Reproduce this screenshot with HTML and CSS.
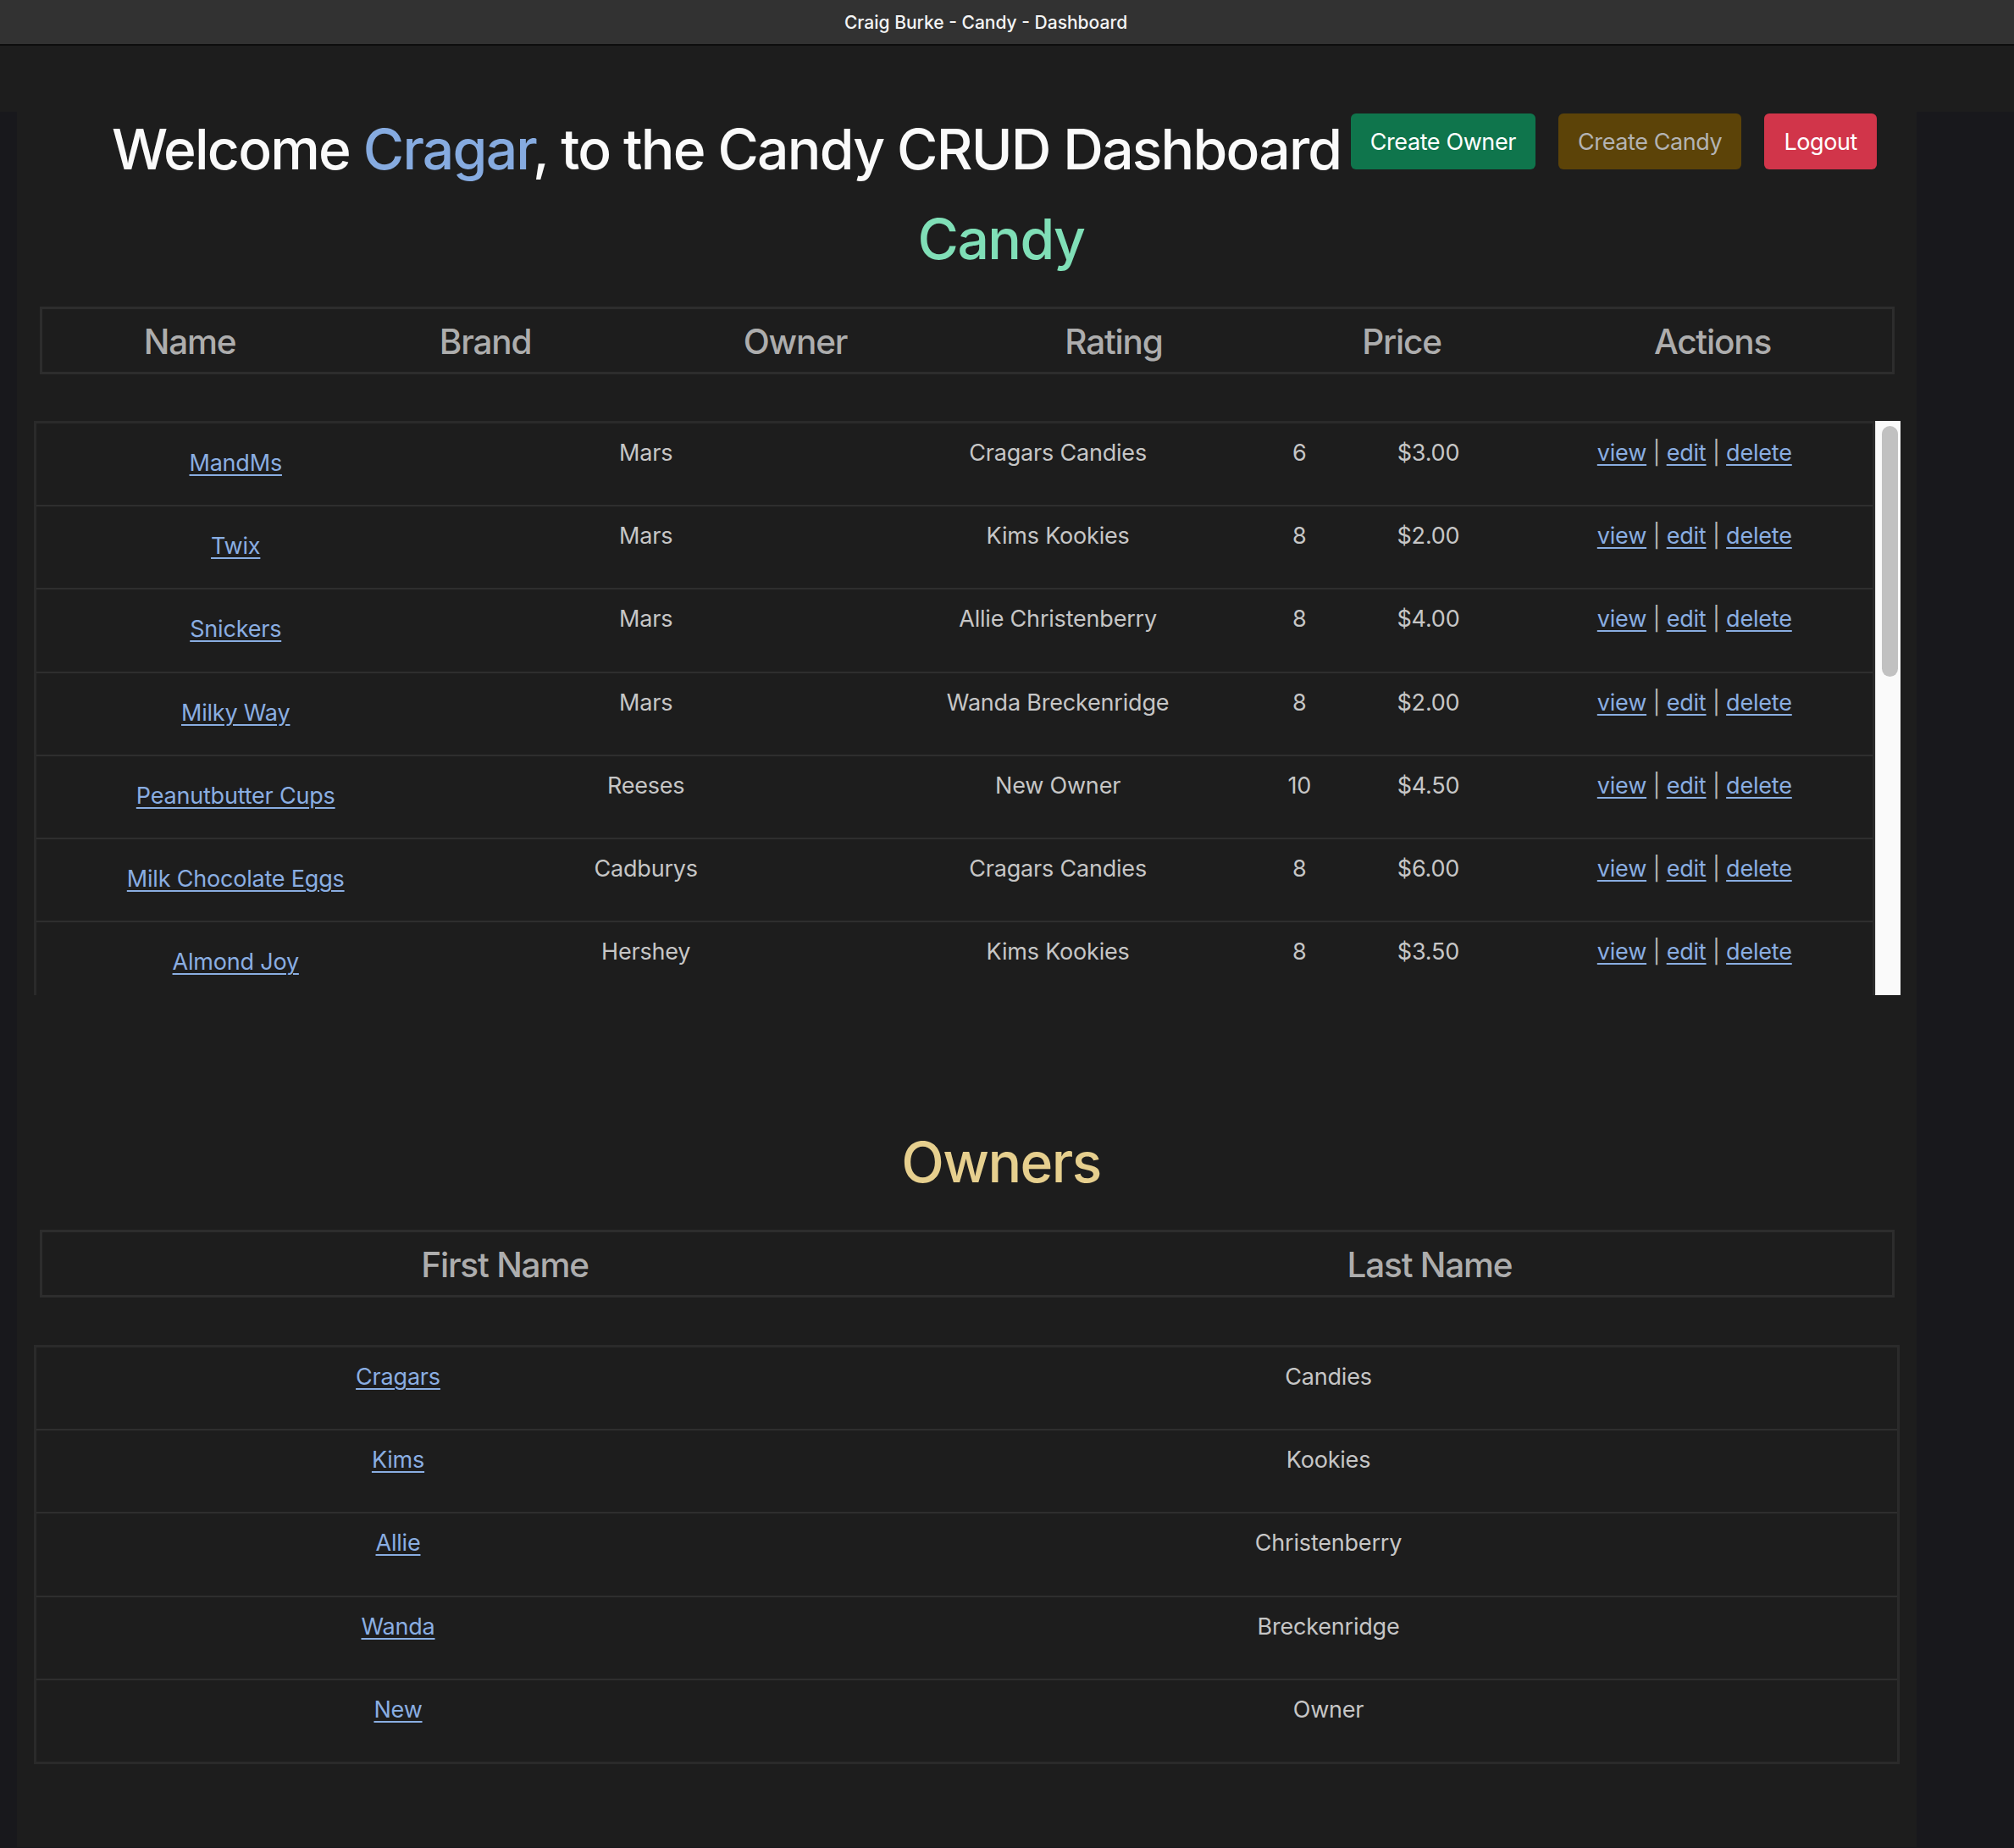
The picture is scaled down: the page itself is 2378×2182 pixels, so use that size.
FILE: index.html
```html
<!DOCTYPE html>
<html lang="en">
<head>
<meta charset="utf-8">
<title>Craig Burke - Candy - Dashboard</title>
<link rel="stylesheet" href="styles.css">
</head>
<body>
<div class="titlebar">Craig Burke - Candy - Dashboard</div>
<div class="topband"></div>
<main class="container">
  <header class="page-header">
    <h1 class="welcome">Welcome <span class="user">Cragar</span>, to the Candy CRUD Dashboard</h1>
    <nav class="actions">
      <a class="btn btn-success" href="#">Create Owner</a>
      <a class="btn btn-warning" href="#">Create Candy</a>
      <a class="btn btn-danger" href="#">Logout</a>
    </nav>
  </header>

  <h2 class="section-title candy-title">Candy</h2>
  <table class="head-table">
    <colgroup><col class="hc1"><col class="hc2"><col class="hc3"><col class="hc4"><col class="hc5"><col class="hc6"></colgroup>
    <thead><tr><th>Name</th><th>Brand</th><th>Owner</th><th>Rating</th><th>Price</th><th>Actions</th></tr></thead>
  </table>
  <div class="candy-scroll">
    <div class="candy-viewport">
      <table class="data-table candy-table">
        <colgroup><col class="cc1"><col class="cc2"><col class="cc3"><col class="cc4"><col class="cc5"><col class="cc6"></colgroup>
        <tbody>
          <tr><td class="name"><a href="#">MandMs</a></td><td>Mars</td><td>Cragars Candies</td><td>6</td><td>$3.00</td><td><a href="#">view</a> <span class="sep">|</span> <a href="#">edit</a> <span class="sep">|</span> <a href="#">delete</a></td></tr>
          <tr><td class="name"><a href="#">Twix</a></td><td>Mars</td><td>Kims Kookies</td><td>8</td><td>$2.00</td><td><a href="#">view</a> <span class="sep">|</span> <a href="#">edit</a> <span class="sep">|</span> <a href="#">delete</a></td></tr>
          <tr><td class="name"><a href="#">Snickers</a></td><td>Mars</td><td>Allie Christenberry</td><td>8</td><td>$4.00</td><td><a href="#">view</a> <span class="sep">|</span> <a href="#">edit</a> <span class="sep">|</span> <a href="#">delete</a></td></tr>
          <tr><td class="name"><a href="#">Milky Way</a></td><td>Mars</td><td>Wanda Breckenridge</td><td>8</td><td>$2.00</td><td><a href="#">view</a> <span class="sep">|</span> <a href="#">edit</a> <span class="sep">|</span> <a href="#">delete</a></td></tr>
          <tr><td class="name"><a href="#">Peanutbutter Cups</a></td><td>Reeses</td><td>New Owner</td><td>10</td><td>$4.50</td><td><a href="#">view</a> <span class="sep">|</span> <a href="#">edit</a> <span class="sep">|</span> <a href="#">delete</a></td></tr>
          <tr><td class="name"><a href="#">Milk Chocolate Eggs</a></td><td>Cadburys</td><td>Cragars Candies</td><td>8</td><td>$6.00</td><td><a href="#">view</a> <span class="sep">|</span> <a href="#">edit</a> <span class="sep">|</span> <a href="#">delete</a></td></tr>
          <tr><td class="name"><a href="#">Almond Joy</a></td><td>Hershey</td><td>Kims Kookies</td><td>8</td><td>$3.50</td><td><a href="#">view</a> <span class="sep">|</span> <a href="#">edit</a> <span class="sep">|</span> <a href="#">delete</a></td></tr>
        </tbody>
      </table>
    </div>
    <div class="scrollbar"><div class="scroll-thumb"></div></div>
  </div>

  <h2 class="section-title owners-title">Owners</h2>
  <table class="head-table">
    <colgroup><col class="half"><col class="half"></colgroup>
    <thead><tr><th>First Name</th><th>Last Name</th></tr></thead>
  </table>
  <table class="data-table owners-table">
    <colgroup><col class="oc1"><col class="oc2"></colgroup>
    <tbody>
      <tr><td><a href="#">Cragars</a></td><td>Candies</td></tr>
      <tr><td><a href="#">Kims</a></td><td>Kookies</td></tr>
      <tr><td><a href="#">Allie</a></td><td>Christenberry</td></tr>
      <tr><td><a href="#">Wanda</a></td><td>Breckenridge</td></tr>
      <tr><td><a href="#">New</a></td><td>Owner</td></tr>
    </tbody>
  </table>
</main>
</body>
</html>
```
FILE: styles.css
```css
* { box-sizing: border-box; }

html, body { margin: 0; padding: 0; }

body {
  background: #18181c;
  font-family: "Inter", "Noto Sans", "Liberation Sans", sans-serif;
  color: #c6c6c6;
}

.titlebar {
  height: 54px;
  background: #323232;
  border-bottom: 2px solid #0d0d0d;
  color: #f4f4f4;
  font-size: 21px;
  font-weight: 500;
  display: flex;
  align-items: center;
  justify-content: center;
  padding-right: 50px;
}

.topband {
  height: 78px;
  background: #1d1d1d;
}

.container {
  margin: 0 115px 0 20px;
  background: #1d1d1d;
  padding-bottom: 98px;
}

.page-header {
  display: flex;
  justify-content: space-between;
  align-items: flex-start;
  padding: 2px 47px 0 112px;
}

.welcome {
  margin: 2px 0 0;
  font-size: 66px;
  font-weight: 500;
  line-height: 81px;
  letter-spacing: -1.8px;
  color: #fafafa;
  white-space: nowrap;
}

.user { color: #86abe0; }

.actions {
  display: flex;
  gap: 27px;
}

.btn {
  display: inline-block;
  font-size: 27px;
  line-height: 41px;
  letter-spacing: -0.4px;
  padding: 12.5px 23px;
  border-radius: 6px;
  text-decoration: none;
  white-space: nowrap;
}

.btn-success { background: #0f754c; color: #ffffff; }
.btn-warning { background: #5c4308; color: #b3b3b3; }
.btn-danger { background: #d1354a; color: #ffffff; }

.section-title {
  margin: 25px 0 0 81px;
  text-align: center;
  font-size: 66px;
  font-weight: 500;
  line-height: 81px;
  letter-spacing: -1.6px;
}

.candy-title { color: #80dfb7; }
.owners-title { color: #e6cf8e; margin-top: 157px; }

.head-table {
  margin: 39px 0 0 27px;
  width: 2190px;
  border: 3px solid #2d2d2d;
  border-collapse: separate;
  border-spacing: 0;
  table-layout: fixed;
}

.head-table th {
  height: 74px;
  padding: 3px 0 0;
  font-size: 40.5px;
  font-weight: 500;
  line-height: 71px;
  letter-spacing: -1.2px;
  color: #adadad;
  text-align: center;
}

.hc1 { width: 348px; }
.hc2 { width: 350px; }
.hc3 { width: 382px; }
.hc4 { width: 370px; }
.hc5 { width: 310px; }
.hc6 { width: 424px; }
.half { width: 50%; }

.candy-scroll {
  margin: 55px 0 0 20px;
  width: 2204px;
  height: 678px;
  display: flex;
}

.candy-viewport {
  flex: 1;
  overflow: hidden;
}

.scrollbar {
  width: 30px;
  flex: none;
  background: #fafafa;
  border-left: 1px solid #e2e2e2;
  padding: 6px 3px 0 7px;
}

.scroll-thumb {
  height: 296px;
  background: #c1c1c1;
  border-radius: 10px;
}

.data-table {
  width: 100%;
  border: 3px solid #2a2a2a;
  border-collapse: separate;
  border-spacing: 0;
  table-layout: fixed;
}

.data-table td {
  padding: 15px 0 41.2px;
  font-size: 27px;
  line-height: 40px;
  letter-spacing: -0.2px;
  text-align: center;
  vertical-align: top;
  color: #c6c6c6;
  white-space: nowrap;
}

.data-table tr + tr td { border-top: 2px solid #2e2e2e; }

.data-table a {
  color: #8aaee2;
  text-decoration: underline;
  text-decoration-thickness: 2px;
  text-underline-offset: 4px;
}

.sep { color: #b4b4b4; }

.candy-table td.name { padding-top: 27px; padding-bottom: 29.2px; }

.cc1 { width: 470px; }
.cc2 { width: 498px; }
.cc3 { width: 474px; }
.cc4 { width: 96px; }
.cc5 { width: 208px; }
.cc6 { width: 420px; }

.owners-table {
  margin: 56px 0 0 20px;
  width: 2203px;
}

.oc1 { width: 854px; }
.oc2 { width: 1343px; }
```
